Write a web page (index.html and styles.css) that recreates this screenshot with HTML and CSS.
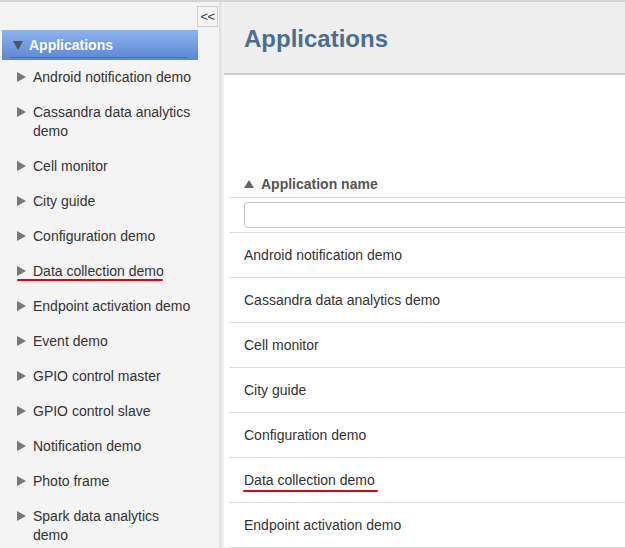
FILE: index.html
```html
<!DOCTYPE html>
<html>
<head>
<meta charset="utf-8">
<link rel="stylesheet" href="styles.css">
</head>
<body>
<div class="app">
  <aside class="sidebar">
    <div class="collapse-row"><button class="collapse">&lt;&lt;</button></div>
    <div class="tree-head"><div class="tree-head-inner"><span class="tri-down"></span>Applications</div></div>
    <ul class="tree">
      <li><span class="tri"></span><span>Android notification demo</span></li>
      <li><span class="tri"></span><span>Cassandra data analytics demo</span></li>
      <li><span class="tri"></span><span>Cell monitor</span></li>
      <li><span class="tri"></span><span>City guide</span></li>
      <li><span class="tri"></span><span>Configuration demo</span></li>
      <li class="marked"><span class="tri"></span><span>Data collection demo</span></li>
      <li><span class="tri"></span><span>Endpoint activation demo</span></li>
      <li><span class="tri"></span><span>Event demo</span></li>
      <li><span class="tri"></span><span>GPIO control master</span></li>
      <li><span class="tri"></span><span>GPIO control slave</span></li>
      <li><span class="tri"></span><span>Notification demo</span></li>
      <li><span class="tri"></span><span>Photo frame</span></li>
      <li><span class="tri"></span><span>Spark data analytics demo</span></li>
    </ul>
  </aside>
  <div class="divider"></div>
  <main class="main">
    <header class="page-head"><h1>Applications</h1></header>
    <section class="grid">
      <div class="grid-head"><span class="tri-up"></span>Application name</div>
      <div class="grid-filter"><input class="filter-input" type="text"></div>
      <div class="grid-row">Android notification demo</div>
      <div class="grid-row">Cassandra data analytics demo</div>
      <div class="grid-row">Cell monitor</div>
      <div class="grid-row">City guide</div>
      <div class="grid-row">Configuration demo</div>
      <div class="grid-row marked"><span class="mark-text">Data collection demo</span></div>
      <div class="grid-row">Endpoint activation demo</div>
    </section>
  </main>
</div>
</body>
</html>
```

FILE: styles.css
```css
html, body {
  margin: 0;
  padding: 0;
  overflow: hidden;
}
body {
  font-family: "Liberation Sans", Arial, sans-serif;
  font-size: 14px;
  color: #333;
  border-top: 2px solid #d4d4d4;
  background: #fff;
}
.app {
  display: flex;
  height: 546px;
  overflow: hidden;
}
.sidebar {
  flex: none;
  width: 219px;
  background: #f4f4f4;
}
.collapse-row {
  height: 28px;
  display: flex;
  justify-content: flex-end;
  align-items: flex-start;
}
.collapse {
  margin-top: 4px;
  margin-right: 1px;
  width: 21px;
  height: 21px;
  padding: 0;
  border: 1px solid #cfcfcf;
  background: #f4f4f4;
  color: #2c3c58;
  font-family: "Liberation Sans", Arial, sans-serif;
  font-size: 13px;
  line-height: 19px;
  letter-spacing: -0.5px;
  text-align: center;
}
.tree-head {
  margin-left: 2px;
  width: 196px;
  height: 30px;
  background: linear-gradient(#8db3ef, #5a86d4);
}
.tree-head-inner {
  margin-left: 8px;
  width: 174px;
  padding-left: 3px;
  padding-top: 3px;
  height: 24px;
  line-height: 24px;
  border-bottom: 1px solid #6a6a6a;
  color: #fff;
  font-weight: bold;
  font-size: 14px;
  display: flex;
  align-items: center;
}
.tri-down {
  width: 0;
  height: 0;
  border-left: 5px solid transparent;
  border-right: 5px solid transparent;
  border-top: 9px solid #555;
  margin-right: 6px;
  margin-top: 1px;
}
.tree {
  list-style: none;
  margin: 0;
  padding: 0;
}
.tree li {
  position: relative;
  display: flex;
  align-items: flex-start;
  padding: 8px 24px 8px 18px;
  line-height: 19px;
  color: #333;
}
.tri {
  flex: none;
  width: 0;
  height: 0;
  border-top: 5px solid transparent;
  border-bottom: 5px solid transparent;
  border-left: 9px solid #777;
  margin-top: 4px;
  margin-left: -1px;
  margin-right: 7px;
}
.tree li.marked::after {
  content: "";
  position: absolute;
  left: 17px;
  width: 146px;
  bottom: 8px;
  height: 2px;
  background: #e8000b;
  border-radius: 1px;
}
.divider {
  flex: none;
  width: 5px;
  background: linear-gradient(to right, #dcdcdc, #e6e6e6 40%, #f6f6f6);
}
.main {
  flex: 1;
  min-width: 0;
  overflow: hidden;
  background: #fff;
}
.page-head {
  height: 71px;
  background: #eee;
  border-bottom: 2px solid #cccccc;
  display: flex;
  align-items: center;
  padding-left: 20px;
}
.page-head h1 {
  margin: 0;
  font-size: 24px;
  font-weight: bold;
  color: #4a6e8e;
  line-height: 28px;
  padding-top: 3px;
}
.grid {
  margin-top: 96px;
  margin-left: 5px;
}
.grid-head {
  height: 26px;
  line-height: 26px;
  padding-left: 15px;
  font-weight: bold;
  color: #555;
  border-bottom: 1px solid #dcdcdc;
  display: flex;
  align-items: center;
}
.tri-up {
  width: 0;
  height: 0;
  border-left: 5px solid transparent;
  border-right: 5px solid transparent;
  border-bottom: 8px solid #666;
  margin-right: 7px;
  margin-top: -1px;
}
.grid-filter {
  padding: 4px 0 4px 15px;
  border-bottom: 1px solid #dcdcdc;
}
.filter-input {
  display: block;
  box-sizing: border-box;
  width: 440px;
  height: 26px;
  border: 1px solid #c4c4c4;
  border-radius: 4px;
  background: #fff;
  margin: 0;
}
.grid-row {
  height: 44px;
  line-height: 44px;
  padding-left: 15px;
  border-bottom: 1px solid #dcdcdc;
  color: #333;
}
.mark-text {
  position: relative;
  display: inline-block;
}
.mark-text::after {
  content: "";
  position: absolute;
  left: -1px;
  right: -3px;
  bottom: 10px;
  height: 2px;
  background: #e8000b;
  border-radius: 1px;
}
```
